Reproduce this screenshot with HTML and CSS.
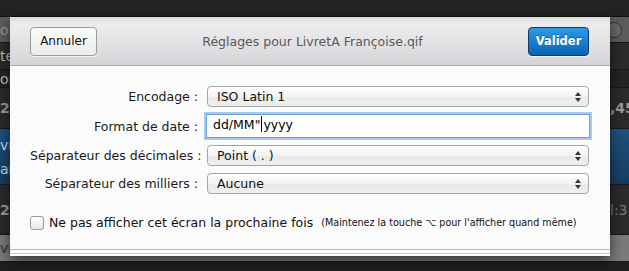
FILE: index.html
```html
<!DOCTYPE html>
<html lang="fr">
<head>
    <meta charset="UTF-8">
    <title>Réglages pour LivretA Françoise.qif</title>
    <link rel="stylesheet" href="styles.css">
</head>
<body>
    <div class="backdrop">
        <div class="topbar"></div>
        <div class="band band-grey"><span class="left">ou</span><span class="right"><span class="knob"></span></span></div>
        <div class="band band-dark1"><span class="left">te</span><span class="right"></span></div>
        <div class="band band-dark2"><span class="left">or</span><span class="right"></span></div>
        <div class="band band-dark3"><span class="left num">2</span><span class="right num">,457</span></div>
        <div class="band band-blue"><span class="left stack"><span>vr</span><span>ar</span></span><span class="right"></span></div>
        <div class="band band-dark3 tall"><span class="left num">2</span><span class="right num dim">l:3</span></div>
        <div class="band band-light"><span class="left">vr</span><span class="right"></span></div>
    </div>

    <div class="sheet">
        <header class="sheet-header">
            <button class="btn btn-cancel">Annuler</button>
            <div class="sheet-title">Réglages pour LivretA Françoise.qif</div>
            <button class="btn btn-primary">Valider</button>
        </header>

        <div class="sheet-body">
            <div class="form">
                <label class="form-label">Encodage :</label>
                <div class="popup">ISO Latin 1<span class="arrows"></span></div>

                <label class="form-label">Format de date :</label>
                <div class="field">dd/MM"<span class="caret"></span>yyyy</div>

                <label class="form-label">Séparateur des décimales :</label>
                <div class="popup">Point ( . )<span class="arrows"></span></div>

                <label class="form-label">Séparateur des milliers :</label>
                <div class="popup">Aucune<span class="arrows"></span></div>
            </div>

            <div class="check-row">
                <span class="checkbox"></span>
                <span class="check-label">Ne pas afficher cet écran la prochaine fois</span>
                <span class="check-hint">(Maintenez la touche ⌥ pour l'afficher quand même)</span>
            </div>
        </div>
        <div class="sheet-foot"></div>
    </div>
</body>
</html>
```

FILE: styles.css
```css
body {
    margin: 0;
    width: 629px;
    height: 271px;
    overflow: hidden;
    background: #1f1f1f;
    font-family: "DejaVu Sans", "Liberation Sans", sans-serif;
    position: relative;
}

/* window behind the sheet */
.backdrop {
    display: flex;
    flex-direction: column;
}
.topbar {
    height: 17px;
    background: #232323;
    border-bottom: 1px solid #111;
    box-sizing: border-box;
}
.band {
    display: flex;
    justify-content: space-between;
    align-items: center;
    color: #bbb;
    font-size: 14px;
    overflow: hidden;
    white-space: nowrap;
    border-bottom: 1px solid #181818;
}
.band .left {
    width: 10px;
    overflow: hidden;
}
.band .right {
    width: 19px;
    overflow: hidden;
}
.band .num {
    font-weight: bold;
    color: #9a9a9a;
}
.band .dim {
    font-weight: normal;
    color: #777;
}
.band-grey {
    height: 25px;
    background: #5c5c5c;
    color: #9a9a9a;
}
.band-dark1 {
    height: 26px;
    background: #2b2b2b;
}
.band-dark2 {
    height: 17px;
    background: #242424;
}
.band-dark3 {
    height: 40px;
    background: #2a2a2a;
}
.band-blue {
    height: 55px;
    background: linear-gradient(#1e5280, #143c60);
    color: #cfd8e0;
}
.band.tall {
    height: 49px;
}
.band-light {
    height: 26px;
    background: #7a7a7a;
    color: #333;
}
.stack {
    display: flex;
    flex-direction: column;
    gap: 8px;
}
.knob {
    display: block;
    width: 14px;
    height: 14px;
    margin-left: -4px;
    border: 1px solid #333;
    border-radius: 50%;
    background: #6a6a6a;
}

/* the sheet */
.sheet {
    position: absolute;
    left: 10px;
    top: 17px;
    width: 600px;
    height: 239px;
    background: #fbfbfb;
    box-shadow: 0 4px 12px rgba(0, 0, 0, 0.6);
    display: flex;
    flex-direction: column;
}
.sheet-header {
    height: 49px;
    box-sizing: border-box;
    padding: 0 21px 0 20px;
    display: flex;
    align-items: center;
    justify-content: space-between;
    background: linear-gradient(#f2f2f3, #d5d5d9);
    border-bottom: 1px solid #a7a7ae;
    box-shadow: inset 0 6px 6px -4px rgba(0, 0, 0, 0.15);
}
.sheet-title {
    color: #585858;
    font-size: 12.5px;
}
.btn {
    height: 29px;
    padding: 0;
    font-family: inherit;
    font-size: 12px;
    color: #111;
    border: 1px solid #9c9c9c;
    border-radius: 4px;
    background: linear-gradient(#fbfbfb, #ececec);
    box-shadow: 0 1px 0 rgba(255, 255, 255, 0.7);
}
.btn-cancel {
    width: 67px;
}
.btn-primary {
    width: 61px;
    color: #fff;
    font-weight: bold;
    font-size: 11.5px;
    border-color: #0d3c6b;
    background: linear-gradient(#2a9be4, #0b63b8);
    text-shadow: 0 -1px 0 rgba(0, 0, 0, 0.3);
}

.sheet-body {
    flex: 1;
    padding: 20px 20px 0 20px;
}
.form {
    display: grid;
    grid-template-columns: 168px 384px;
    grid-template-rows: 21px 24px 21px 21px;
    column-gap: 8px;
    row-gap: 7px;
    align-items: center;
}
.form-label {
    text-align: right;
    font-size: 12.5px;
    color: #1a1a1a;
    white-space: nowrap;
}
.popup {
    position: relative;
    height: 21px;
    box-sizing: border-box;
    padding-left: 9px;
    margin-left: 1px;
    margin-right: 1px;
    line-height: 19px;
    font-size: 12.5px;
    color: #111;
    border: 1px solid #a6a6a6;
    border-radius: 4px;
    background: linear-gradient(#ffffff, #f3f3f3 50%, #e9e9e9 51%, #efefef);
}
.arrows {
    position: absolute;
    right: 6px;
    top: 5px;
    width: 7px;
    height: 10px;
}
.arrows::before,
.arrows::after {
    content: "";
    position: absolute;
    left: 0;
    border-left: 3.5px solid transparent;
    border-right: 3.5px solid transparent;
}
.arrows::before {
    top: 0;
    border-bottom: 4px solid #333;
}
.arrows::after {
    bottom: 0;
    border-top: 4px solid #333;
}
.field {
    height: 24px;
    box-sizing: border-box;
    padding-left: 6px;
    line-height: 20px;
    font-size: 12.5px;
    color: #000;
    background: #fff;
    border: 1px solid #6e9fd6;
    box-shadow: 0 0 0 2px #a7c8ec;
}
.caret {
    display: inline-block;
    width: 1px;
    height: 16px;
    background: #000;
    vertical-align: -3px;
    margin: 0 1px;
}

.check-row {
    display: flex;
    align-items: center;
    margin-top: 21px;
    white-space: nowrap;
}
.checkbox {
    width: 12px;
    height: 12px;
    border: 1px solid #9a9a9a;
    border-radius: 3px;
    background: linear-gradient(#ffffff, #e8e8e8);
    margin-right: 5px;
}
.check-label {
    font-size: 12.5px;
    color: #111;
}
.check-hint {
    font-size: 9.6px;
    color: #111;
    margin-left: 8px;
}
.sheet-foot {
    height: 5px;
    border-top: 1px solid #b5b5b5;
    border-bottom: 1px solid #c8c8c8;
    box-sizing: border-box;
    margin-bottom: 2px;
}
```
